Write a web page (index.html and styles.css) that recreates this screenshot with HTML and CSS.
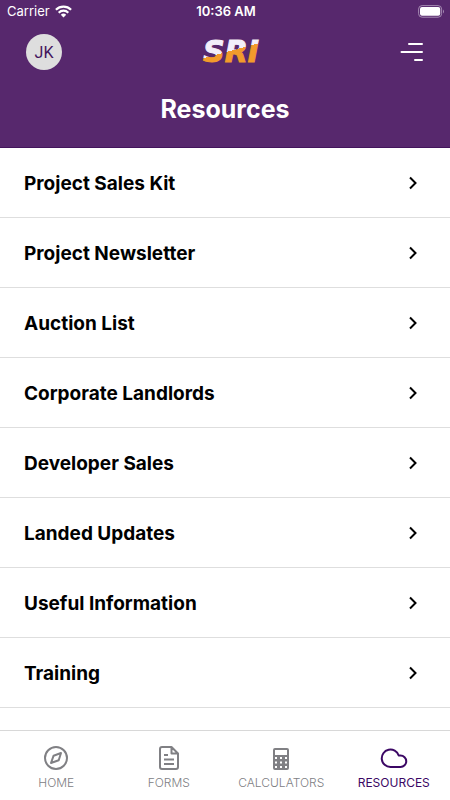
FILE: index.html
```html
<!DOCTYPE html>
<html lang="en">
<head>
<meta charset="utf-8">
<meta name="viewport" content="width=device-width, initial-scale=1">
<title>Resources</title>
<link rel="stylesheet" href="styles.css">
</head>
<body>
<div class="app">
  <header class="header">
    <div class="status">
      <div class="carrier">
        <span>Carrier</span>
        <svg width="17" height="13" viewBox="0 0 17 13" fill="none" stroke="#fff" stroke-width="2.2" aria-hidden="true">
          <path d="M.9 4.8a10.8 10.8 0 0 1 15.2 0M3.7 7.7a6.8 6.8 0 0 1 9.6 0"/>
          <path d="M5.8 9.8a3.9 3.9 0 0 1 5.4 0L8.500 12.500Z" fill="#fff" stroke="none"/>
        </svg>
      </div>
      <time class="clock">10:36 AM</time>
      <svg class="battery" width="27" height="13" viewBox="0 0 27 13" aria-hidden="true">
        <rect x=".6" y=".6" width="23" height="11.600" rx="3.500" fill="none" stroke="#a58bb2"/>
        <rect x="2" y="2" width="20.200" height="8.800" rx="2" fill="#fff"/>
        <path d="M25 4.500q2 2 0 4Z" fill="#a58bb2"/>
      </svg>
    </div>
    <div class="toolbar">
      <button class="avatar" aria-label="Profile JK">JK</button>
      <svg class="logo" width="90" height="36" viewBox="0 0 90 36" role="img" aria-label="SRI">
        <defs>
          <linearGradient id="split" gradientUnits="userSpaceOnUse" x1="47" y1="6" x2="53" y2="28">
            <stop offset=".5" stop-color="#f3effa"/>
            <stop offset=".5" stop-color="#f29b2b"/>
          </linearGradient>
        </defs>
        <text class="logo-text" x="51" y="28" text-anchor="middle" fill="url(#split)" stroke="url(#split)">SRI</text>
      </svg>
      <button class="menu" aria-label="Menu">
        <svg width="24" height="20" viewBox="0 0 24 20" stroke="#fff" stroke-width="2" stroke-linecap="round" aria-hidden="true">
          <path d="M9 2h13M1.500 10H22M15 18h7"/>
        </svg>
      </button>
    </div>
    <h1 class="title">Resources</h1>
  </header>
  <main class="content">
    <ul class="list">
      <li><a class="row" href="#">Project Sales Kit<svg class="chevron" viewBox="0 0 10 14"><path d="m2 1.500 5.500 5.500L2 12.500"/></svg></a></li>
      <li><a class="row" href="#">Project Newsletter<svg class="chevron" viewBox="0 0 10 14"><path d="m2 1.500 5.500 5.500L2 12.500"/></svg></a></li>
      <li><a class="row" href="#">Auction List<svg class="chevron" viewBox="0 0 10 14"><path d="m2 1.500 5.500 5.500L2 12.500"/></svg></a></li>
      <li><a class="row" href="#">Corporate Landlords<svg class="chevron" viewBox="0 0 10 14"><path d="m2 1.500 5.500 5.500L2 12.500"/></svg></a></li>
      <li><a class="row" href="#">Developer Sales<svg class="chevron" viewBox="0 0 10 14"><path d="m2 1.500 5.500 5.500L2 12.500"/></svg></a></li>
      <li><a class="row" href="#">Landed Updates<svg class="chevron" viewBox="0 0 10 14"><path d="m2 1.500 5.500 5.500L2 12.500"/></svg></a></li>
      <li><a class="row" href="#">Useful Information<svg class="chevron" viewBox="0 0 10 14"><path d="m2 1.500 5.500 5.500L2 12.500"/></svg></a></li>
      <li><a class="row" href="#">Training<svg class="chevron" viewBox="0 0 10 14"><path d="m2 1.500 5.500 5.500L2 12.500"/></svg></a></li>
    </ul>
  </main>
  <nav class="tabs" aria-label="Main">
    <a class="tab" href="#">
      <svg class="tab-icon" viewBox="0 0 28 28"><circle cx="14" cy="14" r="11"/><path d="m19 9-2.300 7.200L9 19l2.600-7.300Z"/></svg>
      HOME
    </a>
    <a class="tab" href="#">
      <svg class="tab-icon" viewBox="0 0 28 28"><path d="M16.500 3H7q-2 0-2 2v18q0 2 2 2h14q2 0 2-2V9.500L16.500 3v6.500H23M9 11h4M9 15.500h10M9 20h10"/></svg>
      FORMS
    </a>
    <a class="tab" href="#">
      <svg class="tab-icon" viewBox="0 0 28 28">
        <path class="solid" fill-rule="evenodd" d="M8 4h12q2 0 2 2v18q0 2-2 2H8q-2 0-2-2V6q0-2 2-2ZM8 6v5h12V6ZM8 13v2h2v-2ZM13 13v2h2v-2ZM18 13v2h2v-2ZM8 17.500v2h2v-2ZM13 17.500v2h2v-2ZM18 17.500v2h2v-2ZM8 22v2h2v-2ZM13 22v2h2v-2ZM18 22v2h2v-2Z"/>
      </svg>
      CALCULATORS
    </a>
    <a class="tab active" href="#" aria-current="page">
      <svg class="tab-icon" viewBox="0 0 28 28"><path d="M10.500 23A8.700 8.700 0 1 1 18.700 11.500H20.500A5.750 5.750 0 0 1 20.500 23Z"/></svg>
      RESOURCES
    </a>
  </nav>
</div>
</body>
</html>
```
FILE: styles.css
```css
* { box-sizing: border-box; }

body {
  margin: 0;
  background: #fff;
  color: #000;
  font-family: Inter, "Liberation Sans", sans-serif;
}

.app {
  display: flex;
  flex-direction: column;
  height: 100vh;
}

.header {
  flex: none;
  padding-bottom: 20px;
  background: #57286d;
  border-bottom: 1px solid #43145c;
  color: #fff;
}

.status {
  display: grid;
  grid-template-columns: 1fr auto 1fr;
  align-items: center;
  height: 24px;
  padding: 0 5px 2px 7px;
  font-size: 13px;
}

.carrier {
  display: flex;
  align-items: center;
  gap: 5px;
}

.clock { font-weight: 600; }

.battery { justify-self: end; }

.toolbar {
  display: grid;
  grid-template-columns: 1fr auto 1fr;
  align-items: center;
  height: 56px;
  padding: 0 26px;
}

button {
  padding: 0;
  border: 0;
  background: none;
  font-family: inherit;
}

.avatar {
  width: 36px;
  height: 36px;
  border-radius: 50%;
  background: #dedede;
  color: #43145c;
  font-family: Roboto, sans-serif;
  font-size: 16px;
}

.logo { display: block; }

.logo-text {
  font-family: "DejaVu Sans", sans-serif;
  font-size: 30px;
  font-style: italic;
  font-weight: 700;
  stroke-width: 1px;
}

.menu {
  display: flex;
  justify-self: end;
}

.title {
  margin: 12px 0 0;
  font-size: 25px;
  font-weight: 700;
  line-height: 35px;
  text-align: center;
}

.content {
  flex: 1;
  min-height: 0;
  overflow: hidden;
}

.list {
  margin: 0;
  padding: 0;
  list-style: none;
}

.row {
  display: flex;
  align-items: center;
  justify-content: space-between;
  height: 70px;
  padding: 1px 32px 0 24px;
  border-bottom: 1px solid #dedede;
  color: #000;
  font-size: 19px;
  font-weight: 700;
  text-decoration: none;
}

.chevron {
  width: 10px;
  height: 14px;
  fill: none;
  stroke: #000;
  stroke-width: 2;
}

.tabs {
  display: grid;
  flex: none;
  grid-template-columns: repeat(4, 1fr);
  height: 70px;
  border-top: 1px solid #d8d8d8;
}

.tab {
  display: flex;
  flex-direction: column;
  align-items: center;
  padding-top: 13px;
  color: #808084;
  font-size: 12px;
  font-weight: 300;
  line-height: 20px;
  text-decoration: none;
}

.tab-icon {
  width: 28px;
  height: 28px;
  margin-bottom: 1px;
  fill: none;
  stroke: currentColor;
  stroke-linejoin: round;
  stroke-width: 2;
}

.tab-icon .solid {
  fill: currentColor;
  stroke: none;
}

.active {
  color: #3b0764;
  font-weight: 400;
}
```
